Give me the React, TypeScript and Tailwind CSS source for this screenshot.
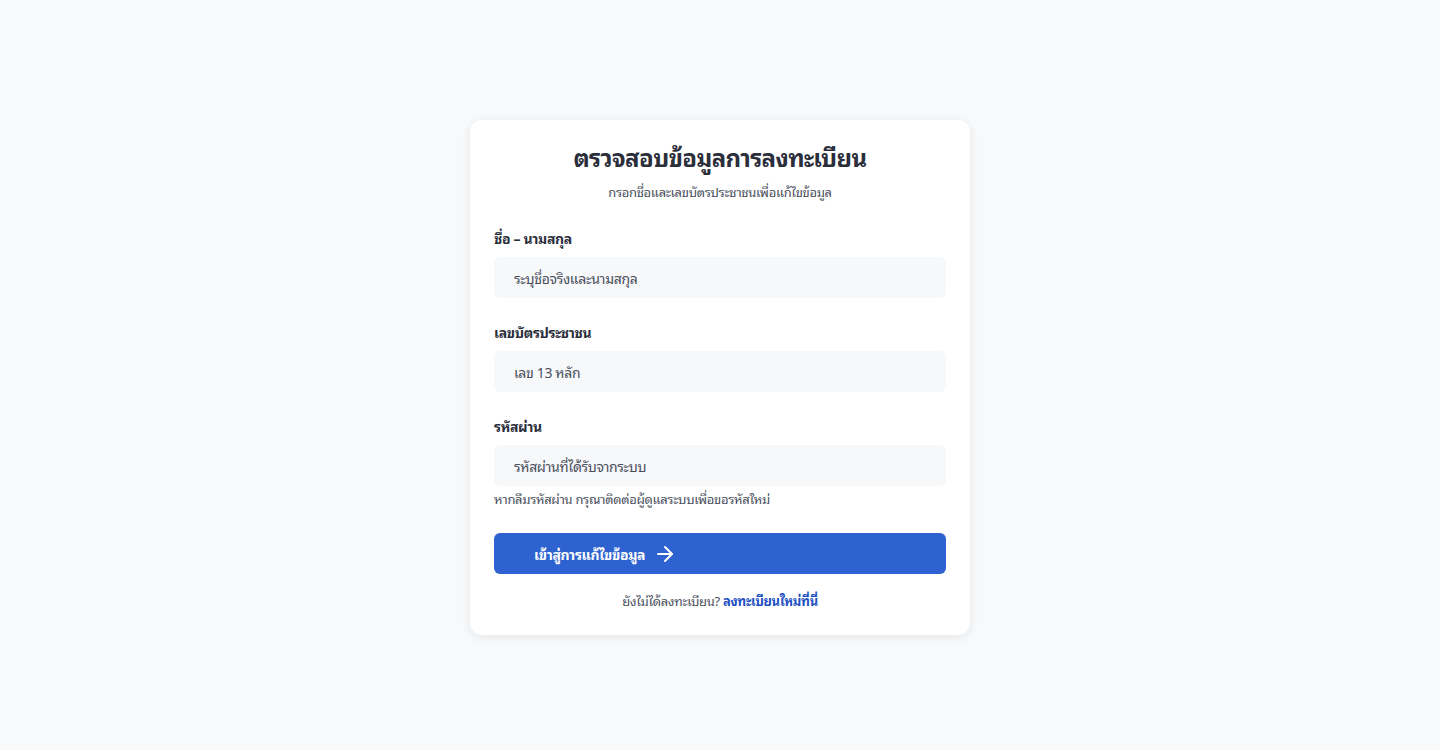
import React, { useState } from 'react';
import { ArrowRight } from 'lucide-react';

const inputClass =
  'w-full h-[41px] px-5 bg-[#f7f8fa] rounded-md text-sm tracking-tight text-[#2d3142] placeholder:text-[#4a4f5c] outline-none focus:ring-2 focus:ring-[#2d62d0]';

const labelClass = 'block text-sm leading-5 font-bold tracking-tight text-[#2b2e3b]';

export default function App() {
  const [form, setForm] = useState({ name: '', idCard: '', password: '' });

  const handleChange = (e: React.ChangeEvent<HTMLInputElement>) => {
    const { name, value } = e.target;
    setForm(prev => ({ ...prev, [name]: value }));
  };

  return (
    <div className="min-h-screen bg-[#f8f9fb] flex justify-center pt-[120px] font-[family-name:Noto_Sans_Thai_Looped,sans-serif]">
      <div className="w-[500px] h-fit bg-white rounded-xl shadow-[0_2px_10px_rgba(0,0,0,0.08)] px-6 pt-5 pb-6">
        <h1 className="text-center text-2xl leading-8 font-bold tracking-tight text-[#2b2e3b]">ตรวจสอบข้อมูลการลงทะเบียน</h1>
        <p className="text-center text-[13px] leading-5 mt-2.5 tracking-tight text-[#4a4f5c]">กรอกชื่อและเลขบัตรประชาชนเพื่อแก้ไขข้อมูล</p>

        <div className="mt-[26px]">
          <label className={labelClass}>ชื่อ – นามสกุล</label>
          <input
            name="name"
            value={form.name}
            onChange={handleChange}
            placeholder="ระบุชื่อจริงและนามสกุล"
            className={`mt-[9px] ${inputClass}`}
          />
        </div>

        <div className="mt-6">
          <label className={labelClass}>เลขบัตรประชาชน</label>
          <input
            name="idCard"
            value={form.idCard}
            onChange={handleChange}
            placeholder="เลข 13 หลัก"
            className={`mt-[9px] ${inputClass}`}
          />
        </div>

        <div className="mt-6">
          <label className={labelClass}>รหัสผ่าน</label>
          <input
            name="password"
            type="password"
            value={form.password}
            onChange={handleChange}
            placeholder="รหัสผ่านที่ได้รับจากระบบ"
            className={`mt-[9px] ${inputClass}`}
          />
          <p className="mt-1 text-[13px] leading-[18px] tracking-tight text-[#4a4f5c]">หากลืมรหัสผ่าน กรุณาติดต่อผู้ดูแลระบบเพื่อขอรหัสใหม่</p>
        </div>

        <button className="mt-[25px] w-full h-[41px] rounded-md bg-[#2d62d0] hover:bg-[#2552b5] text-white font-bold text-sm tracking-tight flex items-center gap-2 pl-10">
          เข้าสู่การแก้ไขข้อมูล <ArrowRight size={24} strokeWidth={2} />
        </button>

        <p className="mt-[17px] text-center text-[13px] leading-5 tracking-tight text-[#4a4f5c]">
          ยังไม่ได้ลงทะเบียน? <a href="#" className="font-bold text-[#2150c0]">ลงทะเบียนใหม่ที่นี่</a>
        </p>
      </div>
    </div>
  );
}
